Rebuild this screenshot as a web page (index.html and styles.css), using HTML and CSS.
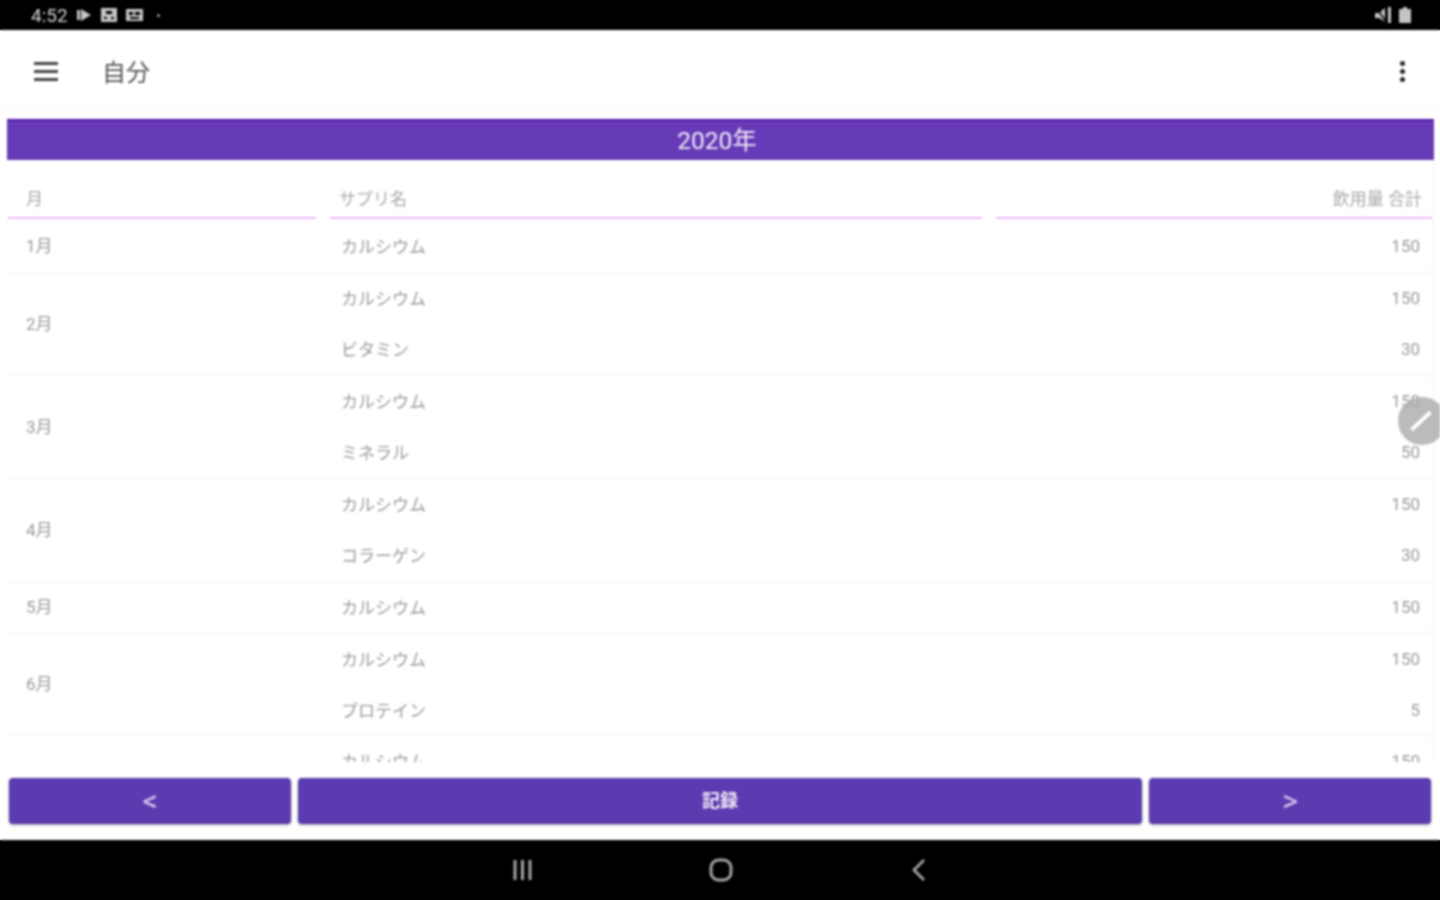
FILE: index.html
```html
<!DOCTYPE html>
<html lang="ja">
<head>
    <meta charset="UTF-8">
    <title>自分</title>
    <link rel="stylesheet" href="styles.css">
</head>
<body>
    <div class="page">
        <!-- Status bar -->
        <div class="status-bar">
            <div class="status-left">
                <span class="clock">4:52</span>
                <svg class="status-icon" width="16" height="16" viewBox="0 0 16 16"><rect x="1" y="3" width="3" height="10"/><path d="M5 2l10 6-10 6z"/></svg>
                <svg class="status-icon" width="18" height="16" viewBox="0 0 18 16"><path fill-rule="evenodd" d="M1 1h16v14H1zM6 4v3h6V4zM4 10v2h3v-2zm7 0v2h3v-2z"/></svg>
                <svg class="status-icon" width="17" height="16" viewBox="0 0 17 16"><path fill-rule="evenodd" d="M0 2h17v12H0zM3 5v3h4V5zm6 0v3h5V5zM4 10v2h9v-2z"/></svg>
                <span class="status-dot"></span>
            </div>
            <div class="status-right">
                <svg class="status-icon" width="17" height="18" viewBox="0 0 17 18"><path d="M0 7h4l6-5v14l-6-4H0z"/><path d="M1 1l10 15" stroke="#000" stroke-width="1.5"/><rect x="13" y="1" width="3" height="16"/></svg>
                <svg class="status-icon" width="12" height="18" viewBox="0 0 12 18"><path d="M4 1h4v2h4v14H0V3h4z"/></svg>
            </div>
        </div>

        <!-- App bar -->
        <header class="app-bar">
            <div class="menu-icon"><span></span><span></span><span></span></div>
            <h1 class="app-title">自分</h1>
            <div class="more-icon"><span></span><span></span><span></span></div>
        </header>

        <!-- Main -->
        <main class="main-content">
            <div class="year-bar">2020年</div>
            <div class="table-area">
                <div class="table-head">
                    <div class="head-cell">月</div>
                    <div class="head-cell head-name">サプリ名</div>
                    <div class="head-cell head-total">飲用量 合計</div>
                </div>

                <div class="month-row">
                    <div class="month">1月</div>
                    <div class="items">
                        <div class="item"><span class="name">カルシウム</span><span class="amount">150</span></div>
                    </div>
                </div>
                <div class="month-row">
                    <div class="month">2月</div>
                    <div class="items">
                        <div class="item"><span class="name">カルシウム</span><span class="amount">150</span></div>
                        <div class="item"><span class="name">ビタミン</span><span class="amount">30</span></div>
                    </div>
                </div>
                <div class="month-row">
                    <div class="month">3月</div>
                    <div class="items">
                        <div class="item"><span class="name">カルシウム</span><span class="amount">150</span></div>
                        <div class="item"><span class="name">ミネラル</span><span class="amount">50</span></div>
                    </div>
                </div>
                <div class="month-row">
                    <div class="month">4月</div>
                    <div class="items">
                        <div class="item"><span class="name">カルシウム</span><span class="amount">150</span></div>
                        <div class="item"><span class="name">コラーゲン</span><span class="amount">30</span></div>
                    </div>
                </div>
                <div class="month-row">
                    <div class="month">5月</div>
                    <div class="items">
                        <div class="item"><span class="name">カルシウム</span><span class="amount">150</span></div>
                    </div>
                </div>
                <div class="month-row">
                    <div class="month">6月</div>
                    <div class="items">
                        <div class="item"><span class="name">カルシウム</span><span class="amount">150</span></div>
                        <div class="item"><span class="name">プロテイン</span><span class="amount">5</span></div>
                    </div>
                </div>
                <!-- next row is cut off by the scroll area -->
                <div class="month-row">
                    <div class="month"></div>
                    <div class="items">
                        <div class="item"><span class="name">カルシウム</span><span class="amount">150</span></div>
                    </div>
                </div>
            </div>

            <!-- Floating edit button -->
            <div class="edit-fab"><span class="edit-stroke"></span></div>
        </main>

        <!-- Buttons -->
        <div class="button-bar">
            <button class="bar-btn side-btn arrow-btn">&lt;</button>
            <button class="bar-btn record-btn">記録</button>
            <button class="bar-btn side-btn arrow-btn">&gt;</button>
        </div>

        <!-- Android nav -->
        <div class="nav-bar">
            <svg class="nav-icon" width="24" height="24" viewBox="0 0 24 24"><path d="M4 2v20M11.500 2v20M19 2v20" stroke-width="3"/></svg>
            <svg class="nav-icon" width="24" height="24" viewBox="0 0 24 24"><rect x="2" y="2" width="20" height="20" rx="7.500" stroke-width="3"/></svg>
            <svg class="nav-icon" width="24" height="24" viewBox="0 0 24 24"><path d="M17 2L7 12l10 10" stroke-width="2.800"/></svg>
        </div>
    </div>
</body>
</html>
```

FILE: styles.css
```css
/* Global */
:root {
    --purple: #673ab7;
    --button-purple: #5b3bb0;
    --head-line: #e9b8fb;
    --row-line: #f2f2f2;
    --text-grey: #9a9a9a;
}

* {
    margin: 0;
    padding: 0;
    box-sizing: border-box;
}

/* same bands as the page so the blur has no halo at the window edge */
body {
    height: 900px;
    background: linear-gradient(#000 30px, #fff 30px, #fff 840px, #000 840px);
    font-family: Roboto, "Noto Sans CJK JP", sans-serif;
}

/* the reference is a soft, upscaled capture */
.page {
    width: 1440px;
    height: 900px;
    display: flex;
    flex-direction: column;
    overflow: hidden;
    background: #fff;
    filter: blur(1px);
}

/* Status bar */
.status-bar {
    height: 30px;
    background: #000;
    display: flex;
    justify-content: space-between;
    align-items: center;
    padding: 0 29px 0 31px;
    color: #d4d4d4;
}

.status-left, .status-right {
    display: flex;
    align-items: center;
}

.status-left {
    gap: 8px;
}

.status-right {
    gap: 7px;
}

.clock {
    font-size: 19px;
}

.status-icon {
    fill: #c4c4c4;
}

.status-dot {
    width: 3px;
    height: 3px;
    margin-left: 6px;
    border-radius: 50%;
    background: #aaa;
}

/* App bar */
.app-bar {
    height: 80px;
    background: #fff;
    display: flex;
    align-items: center;
    padding: 4px 35px 0 34px;
    border-bottom: 2px solid #fafafa;
}

.menu-icon {
    width: 24px;
    display: flex;
    flex-direction: column;
    gap: 5px;
}

.menu-icon span {
    height: 3px;
    background: #444;
}

.app-title {
    flex: 1;
    margin-left: 44px;
    padding-bottom: 2px;
    font-size: 24px;
    font-weight: 400;
    color: #555;
}

.more-icon {
    display: flex;
    flex-direction: column;
    gap: 3px;
}

.more-icon span {
    width: 5px;
    height: 5px;
    border-radius: 50%;
    background: #222;
}

/* Main */
.main-content {
    position: relative;
    flex: 1;
    min-height: 0;
    display: flex;
    flex-direction: column;
    padding-top: 9px;
}

.year-bar {
    height: 41px;
    margin: 0 6px 0 7px;
    background: var(--purple);
    border-top: 2px solid #5317a8;
    color: #f1ecf8;
    font-size: 24.5px;
    line-height: 39px;
    text-align: center;
    padding-right: 7px;
}

.table-area {
    flex: 1;
    min-height: 0;
    width: 1434px;
    overflow: hidden;
    padding: 0 1px 0 8px;
    border-right: 1px solid var(--row-line);
}

.table-head {
    height: 59px;
    margin-bottom: 2px;
    display: grid;
    grid-template-columns: 308px 652px 436px;
    column-gap: 14px;
}

.head-cell {
    display: flex;
    align-items: flex-end;
    padding: 0 0 7px 18px;
    border-bottom: 2px solid var(--head-line);
    font-size: 17px;
    line-height: 22px;
    color: #a8a8a8;
}

.head-name {
    padding-left: 9px;
}

.head-total {
    justify-content: flex-end;
    padding: 0 10px 7px 0;
}

.month-row {
    display: grid;
    grid-template-columns: 308px 1102px;
    column-gap: 14px;
    border-bottom: 1px solid var(--row-line);
}

.month {
    align-self: center;
    padding-left: 18px;
    font-size: 17px;
    line-height: 24px;
    color: var(--text-grey);
}

.item {
    height: 51.5px;
    display: grid;
    grid-template-columns: 652px 436px;
    column-gap: 14px;
    align-items: center;
    font-size: 17px;
    line-height: 24px;
    color: var(--text-grey);
}

.month-row .item:last-child {
    height: 50.5px;
}

.name {
    padding: 2px 0 0 11px;
}

.amount {
    padding-right: 12px;
    text-align: right;
}

/* Edit button sits over the table edge */
.edit-fab {
    position: absolute;
    top: 287px;
    left: 1398px;
    width: 48px;
    height: 48px;
    border-radius: 50%;
    background: rgba(170, 170, 170, 0.8);
}

.edit-stroke {
    position: absolute;
    top: 22px;
    left: 10px;
    width: 26px;
    height: 4px;
    background: #fff;
    transform: rotate(-43deg);
}

/* Bottom buttons */
.button-bar {
    height: 78px;
    display: flex;
    gap: 7px;
    padding: 16px 9px;
    background: #fff;
}

.bar-btn {
    height: 46px;
    border: none;
    border-radius: 4px;
    background: var(--button-purple);
    box-shadow: 0 1px 3px rgba(0, 0, 0, 0.35);
    color: #f0eaf8;
    font-family: inherit;
}

.side-btn {
    width: 282px;
}

.arrow-btn {
    font-size: 30px;
    line-height: 44px;
    color: #d9c8f0;
}

.record-btn {
    flex: 1;
    padding-bottom: 4px;
    font-size: 18px;
    font-weight: 700;
}

/* Android nav */
.nav-bar {
    height: 60px;
    background: #000;
    display: flex;
    justify-content: center;
    align-items: center;
    gap: 174px;
    padding-left: 2px;
}

.nav-icon {
    fill: none;
    stroke: #a4a4a4;
}
```
